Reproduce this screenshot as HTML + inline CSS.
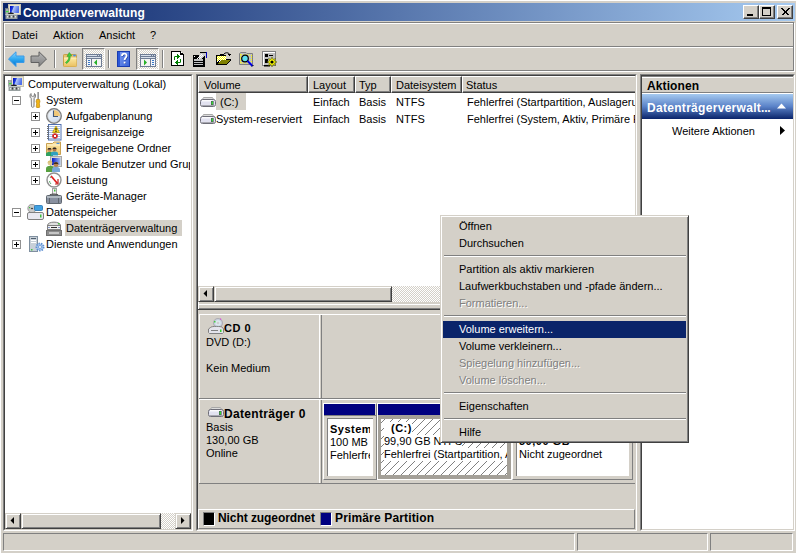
<!DOCTYPE html>
<html><head><meta charset="utf-8">
<style>
*{box-sizing:border-box;margin:0;padding:0}
html,body{width:796px;height:553px;overflow:hidden;background:#D4D0C8;font:11px "Liberation Sans",sans-serif;color:#000}
.a{position:absolute}
.t{position:absolute;white-space:nowrap;line-height:13px;font-size:11px}
.b{font-weight:bold;letter-spacing:0.5px}
.sunk{position:absolute;border:1px solid;border-color:#808080 #fff #fff #808080}
.sunk>.in{position:absolute;left:0;top:0;right:0;bottom:0;border:1px solid;border-color:#404040 #D4D0C8 #D4D0C8 #404040}
.btn{position:absolute;border:1px solid;border-color:#fff #404040 #404040 #fff;box-shadow:inset -1px -1px #808080;background:#D4D0C8}
.hdr{position:absolute;top:0;height:16px;border:1px solid;border-color:#fff #404040 #404040 #fff;box-shadow:inset -1px -1px #808080;background:#D4D0C8;border-left-width:1px}
.dither{background-color:#fff;background-image:linear-gradient(45deg,#D4D0C8 25%,transparent 25%,transparent 75%,#D4D0C8 75%),linear-gradient(45deg,#D4D0C8 25%,transparent 25%,transparent 75%,#D4D0C8 75%);background-size:2px 2px;background-position:0 0,1px 1px}
.sb{position:absolute;height:16px;border:1px solid;border-color:#D4D0C8 #404040 #404040 #D4D0C8;box-shadow:inset 1px 1px #fff,inset -1px -1px #808080;background:#D4D0C8}
.hl{position:absolute;height:1px}
.vl{position:absolute;width:1px}
.hatch{background-color:#fff;background-image:repeating-linear-gradient(-45deg,transparent 0,transparent 4.5px,#A0A0A0 4.5px,#A0A0A0 5.5px)}
.dis{color:#808080;text-shadow:1px 1px 0 #fff}
</style></head><body>
<!-- window frame -->
<div class="hl" style="left:0;top:0;width:796px;background:#fff"></div>
<div class="vl" style="left:0;top:0;height:553px;background:#fff"></div>

<!-- title bar -->
<div class="a" style="left:3px;top:3px;width:792px;height:18px;background:linear-gradient(to right,#0A246A,#A6CAF0)"></div>
<svg class="a" style="left:4px;top:3px" width="17" height="17" viewBox="0 0 17 17">
<rect x="4.5" y="1.5" width="12" height="10" fill="#E8E4D0" stroke="#C8C4B0"/>
<defs><linearGradient id="scr2" x1="0" y1="0" x2="1" y2="0.3"><stop offset="0" stop-color="#0008B8"/><stop offset="0.35" stop-color="#2040E0"/><stop offset="0.45" stop-color="#B0C4F4"/><stop offset="1" stop-color="#5070E8"/></linearGradient></defs>
<rect x="6" y="3" width="9" height="7" fill="url(#scr2)"/>
<rect x="1.5" y="5.5" width="3" height="6" fill="#A8B0B0" stroke="#808888" stroke-width="0.6"/>
<rect x="2" y="8" width="2.5" height="1.2" fill="#40E040"/>
<path d="M4 11C4.5 9 9.5 9 10 11Z" fill="#202020"/>
<rect x="1.5" y="11" width="12" height="5" fill="#98A0A0"/>
<rect x="1.5" y="11" width="12" height="1" fill="#C0C8C8"/>
<rect x="3" y="13" width="1" height="1.5" fill="#E8E8E8"/><rect x="5" y="12.5" width="1" height="2" fill="#404040"/><rect x="7" y="13" width="1" height="1.5" fill="#E8E8E8"/><rect x="9" y="12.5" width="1" height="2" fill="#404040"/><rect x="11" y="13" width="1" height="1.5" fill="#E8E8E8"/>
</svg>
<div class="t b" style="left:23px;top:7px;color:#fff;font-size:12px;letter-spacing:0.1px">Computerverwaltung</div>
<div class="btn" style="left:743px;top:5px;width:16px;height:14px"><div class="a" style="left:3px;top:8px;width:6px;height:2px;background:#000"></div></div>
<div class="btn" style="left:759px;top:5px;width:16px;height:14px"><div class="a" style="left:2px;top:1px;width:9px;height:9px;border:1px solid #000;border-top-width:2px"></div></div>
<div class="btn" style="left:777px;top:5px;width:16px;height:14px">
<svg class="a" style="left:3px;top:2px" width="9" height="8" viewBox="0 0 9 8"><path d="M0.5 0.5L7.5 7.5M1.5 0.5L8.5 7.5M7.5 0.5L0.5 7.5M8.5 0.5L1.5 7.5" stroke="#000" stroke-width="1" fill="none" shape-rendering="crispEdges"/></svg>
</div>

<!-- rebar etched border -->
<div class="a" style="left:4px;top:23px;width:791px;height:49px;border:1px solid #fff"></div>
<div class="a" style="left:3px;top:22px;width:791px;height:49px;border:1px solid #808080"></div>
<div class="hl" style="left:5px;top:46px;width:788px;background:#808080"></div>
<div class="hl" style="left:5px;top:47px;width:788px;background:#fff"></div>

<!-- menu -->
<div class="t" style="left:12px;top:29px">Datei</div>
<div class="t" style="left:53px;top:29px">Aktion</div>
<div class="t" style="left:99px;top:29px">Ansicht</div>
<div class="t" style="left:150px;top:29px">?</div>

<!-- toolbar -->
<svg class="a" style="left:8px;top:51px" width="17" height="16" viewBox="0 0 17 16">
<defs><linearGradient id="gb" x1="0" y1="0" x2="0" y2="1"><stop offset="0" stop-color="#8FD8FF"/><stop offset="0.5" stop-color="#2FA8F0"/><stop offset="1" stop-color="#0070D0"/></linearGradient></defs>
<path d="M0.5 8L8 0.8V5H16V11.5H8V15.5Z" fill="url(#gb)" stroke="#3A9AE8" stroke-width="1"/>
</svg>
<svg class="a" style="left:30px;top:51px" width="17" height="16" viewBox="0 0 17 16">
<defs><linearGradient id="gg" x1="0" y1="0" x2="0" y2="1"><stop offset="0" stop-color="#B8B8B8"/><stop offset="1" stop-color="#808080"/></linearGradient></defs>
<path d="M16.5 8L9 0.8V5H1V11.5H9V15.5Z" fill="url(#gg)" stroke="#606060" stroke-width="1"/>
</svg>
<div class="vl" style="left:54px;top:50px;height:18px;background:#808080"></div>
<div class="vl" style="left:55px;top:50px;height:18px;background:#fff"></div>
<svg class="a" style="left:63px;top:51px" width="16" height="17" viewBox="0 0 16 17">
<defs><linearGradient id="uf" x1="0" y1="0" x2="0" y2="1"><stop offset="0" stop-color="#FCE8A0"/><stop offset="1" stop-color="#EAC060"/></linearGradient></defs>
<rect x="0.5" y="3.5" width="13" height="12" rx="0.8" fill="#E8C070" stroke="#C8A048" stroke-width="1"/>
<rect x="1" y="7" width="12.5" height="8.5" fill="url(#uf)"/>
<path d="M1 7H13.5" stroke="#FFF0B8" stroke-width="1"/>
<ellipse cx="11.5" cy="4.5" rx="1.5" ry="0.9" fill="#4890E8"/>
<path d="M2.5 11.5C4.5 10 6 8.5 5.8 5L4 5.5L6.3 1.5L8.8 4.8L7.2 4.8C7.5 8.5 6 11 3.5 12.5Z" fill="#40D040" stroke="#28A028" stroke-width="0.6"/>
</svg>
<div class="a dither" style="left:82px;top:48px;width:23px;height:22px;border:1px solid;border-color:#808080 #fff #fff #808080;box-shadow:inset 1px 1px #D4D0C8"></div>
<svg class="a" style="left:86px;top:54px" width="16" height="13" viewBox="0 0 16 13" shape-rendering="crispEdges">
<rect x="0" y="0" width="16" height="13" fill="#6E7C94"/>
<rect x="1" y="1" width="10" height="1" fill="#D8E0EC"/><rect x="12" y="1" width="1" height="1" fill="#D8E0EC"/><rect x="14" y="1" width="1" height="1" fill="#D8E0EC"/>
<rect x="1" y="3" width="14" height="1" fill="#D8E0EC"/>
<rect x="1" y="5" width="4" height="7" fill="#F4F6FA"/>
<rect x="6" y="5" width="9" height="7" fill="#F4F4F4"/>
<rect x="2" y="6" width="2" height="1" fill="#3878C8"/><rect x="2" y="8" width="2" height="1" fill="#3878C8"/><rect x="2" y="10" width="2" height="1" fill="#3878C8"/>
<path d="M8 8.5L11 5.5V11.5Z" fill="#28B028" shape-rendering="auto"/>
</svg>
<div class="vl" style="left:108px;top:50px;height:18px;background:#808080"></div>
<div class="vl" style="left:109px;top:50px;height:18px;background:#fff"></div>
<svg class="a" style="left:117px;top:51px" width="13" height="16" viewBox="0 0 13 16">
<defs><linearGradient id="hb" x1="0" y1="0" x2="1" y2="1"><stop offset="0" stop-color="#7898F0"/><stop offset="1" stop-color="#3A64D8"/></linearGradient></defs>
<rect x="0" y="0" width="13" height="16" fill="#1A3CB0"/>
<rect x="1" y="1" width="2.5" height="14" fill="#2C58D8"/>
<rect x="3" y="1" width="9" height="14" fill="url(#hb)"/>
<path d="M5 5C5 3.3 6 2.6 7.3 2.6C8.8 2.6 9.6 3.5 9.6 4.8C9.6 6.5 7.6 6.8 7.6 9" fill="none" stroke="#2040A0" stroke-width="1.8" transform="translate(0.6 0.6)"/>
<path d="M5 5C5 3.3 6 2.6 7.3 2.6C8.8 2.6 9.6 3.5 9.6 4.8C9.6 6.5 7.6 6.8 7.6 9" fill="none" stroke="#fff" stroke-width="1.8"/>
<rect x="7.4" y="11.4" width="1.6" height="1.6" fill="#2040A0"/>
<rect x="6.7" y="10.7" width="1.8" height="1.8" fill="#fff"/>
</svg>
<div class="a dither" style="left:136px;top:48px;width:23px;height:22px;border:1px solid;border-color:#808080 #fff #fff #808080;box-shadow:inset 1px 1px #D4D0C8"></div>
<svg class="a" style="left:140px;top:54px" width="16" height="13" viewBox="0 0 16 13" shape-rendering="crispEdges">
<rect x="0" y="0" width="16" height="13" fill="#6E7C94"/>
<rect x="1" y="1" width="10" height="1" fill="#D8E0EC"/><rect x="12" y="1" width="1" height="1" fill="#D8E0EC"/><rect x="14" y="1" width="1" height="1" fill="#D8E0EC"/>
<rect x="1" y="3" width="14" height="1" fill="#D8E0EC"/>
<rect x="1" y="5" width="9" height="7" fill="#F4F4F4"/>
<rect x="11" y="5" width="4" height="7" fill="#F4F6FA"/>
<rect x="12" y="6" width="2" height="1" fill="#3878C8"/><rect x="12" y="8" width="2" height="1" fill="#3878C8"/><rect x="12" y="10" width="2" height="1" fill="#3878C8"/>
<path d="M4 5.5L7 8.5L4 11.5Z" fill="#28B028" shape-rendering="auto"/>
</svg>
<div class="vl" style="left:162px;top:50px;height:18px;background:#808080"></div>
<div class="vl" style="left:163px;top:50px;height:18px;background:#fff"></div>
<svg class="a" style="left:171px;top:51px" width="14" height="16" viewBox="0 0 14 16" shape-rendering="crispEdges">
<path d="M0 0H9L13 4V15H0Z" fill="#000"/>
<path d="M1 1H9V4H12V14H1Z" fill="#fff"/>
<rect x="10" y="1" width="1" height="1" fill="#fff"/><rect x="10" y="2" width="2" height="1" fill="#000"/>
<g fill="#008000">
<rect x="6" y="3" width="1" height="5"/><rect x="7" y="4" width="1" height="3"/><rect x="8" y="5" width="1" height="1"/>
<rect x="4" y="5" width="2" height="1"/><rect x="3" y="5" width="1" height="1" opacity="0.6"/><rect x="3" y="6" width="1" height="3"/>
<rect x="6" y="9" width="1" height="5"/><rect x="5" y="10" width="1" height="3"/><rect x="4" y="11" width="1" height="1"/>
<rect x="7" y="11" width="2" height="1"/><rect x="9" y="11" width="1" height="1" opacity="0.6"/><rect x="9" y="8" width="1" height="3"/>
</g>
</svg>
<svg class="a" style="left:193px;top:51px" width="16" height="16" viewBox="0 0 16 16" shape-rendering="crispEdges">
<rect x="0" y="4" width="12" height="12" fill="#000"/>
<rect x="1" y="5" width="1" height="1" fill="#fff"/>
<rect x="1" y="8" width="9" height="2" fill="#C0C0C0"/>
<rect x="1" y="11" width="9" height="1" fill="#C0C0C0"/>
<rect x="1" y="13" width="9" height="1" fill="#C0C0C0"/>
<path d="M7 1H13V5H11L8 8H6Z" fill="#C8C8C8"/>
<rect x="7" y="1" width="6" height="1" fill="#000"/>
<rect x="4" y="7" width="1" height="1" fill="#fff"/><rect x="5" y="6" width="1" height="1" fill="#fff"/><rect x="6" y="5" width="1" height="1" fill="#fff"/><rect x="7" y="4" width="1" height="1" fill="#fff"/><rect x="8" y="3" width="1" height="1" fill="#fff"/>
<rect x="6" y="7" width="1" height="1" fill="#fff"/><rect x="7" y="6" width="1" height="1" fill="#fff"/><rect x="8" y="5" width="1" height="1" fill="#fff"/><rect x="9" y="4" width="1" height="1" fill="#fff"/>
<rect x="13" y="1" width="1" height="6" fill="#0000C0"/>
</svg>
<svg class="a" style="left:216px;top:51px" width="16" height="16" viewBox="0 0 16 16" shape-rendering="crispEdges">
<defs><pattern id="yd" width="2" height="2" patternUnits="userSpaceOnUse"><rect width="2" height="2" fill="#FFFF00"/><rect x="1" y="0" width="1" height="1" fill="#fff"/><rect x="0" y="1" width="1" height="1" fill="#fff"/></pattern></defs>
<path d="M0 4H3L4 3H7L8 4H10V8H15V9L11 14H0Z" fill="#000"/>
<rect x="1" y="5" width="9" height="8" fill="url(#yd)"/>
<path d="M2 13L5 9H14L11 13Z" fill="#808000"/>
<path d="M1 13L4 9" stroke="#000" stroke-width="1"/>
<path d="M8 3C9 1.5 12 1.2 13.5 3" fill="none" stroke="#000" stroke-width="1" shape-rendering="auto"/>
<path d="M12 3H15L13.5 5Z" fill="#000"/>
</svg>
<svg class="a" style="left:239px;top:52px" width="16" height="16" viewBox="0 0 16 16">
<path d="M0.5 1.5L2 0.5H7L8 1.5H13.5V12.5H0.5Z" fill="#C0C0C0" stroke="#808080"/>
<path d="M2 3H12M2 11H12" stroke="#FFFF00" stroke-dasharray="1 1"/>
<path d="M1.5 2V11M12.5 3V11" stroke="#FFFF00" stroke-dasharray="1 1"/>
<circle cx="6" cy="6.5" r="3.3" fill="#60E0F0" stroke="#000" stroke-width="1.2"/>
<path d="M8.5 9L13.5 14" stroke="#0000E0" stroke-width="2"/>
<path d="M13 14.5L14.5 13" stroke="#000" stroke-width="1"/>
</svg>
<svg class="a" style="left:262px;top:51px" width="16" height="16" viewBox="0 0 16 16">
<rect x="0.5" y="0.5" width="13" height="14" fill="#C0C0C0" stroke="#808080"/>
<rect x="1" y="1" width="12" height="1" fill="#fff"/><rect x="1" y="1" width="1" height="13" fill="#fff"/>
<rect x="3" y="3" width="3" height="3" fill="#000"/><rect x="7" y="4" width="4" height="1" fill="#000"/>
<rect x="3" y="8" width="3" height="4" fill="#000"/>
<rect x="2" y="14" width="6" height="1.5" fill="#000"/>
<path d="M10 6L11 8.5L13.5 7.5L12.5 10L15 11L12.5 12L13.5 14.5L11 13.5L10 16L9 13.5L6.5 14.5L7.5 12L5 11L7.5 10L6.5 7.5L9 8.5Z" fill="#FFFF00" stroke="#404000" stroke-width="0.5"/>
<circle cx="10" cy="11" r="1.6" fill="#000"/>
</svg>

<!-- left panel -->
<div class="sunk" style="left:3px;top:74px;width:190px;height:457px"><div class="in" style="background:#fff"></div></div>
<!-- tree -->
<svg class="a" style="left:7px;top:75px" width="17" height="17" viewBox="0 0 17 17">
<rect x="4.5" y="1.5" width="12" height="10" fill="#E8E4D0" stroke="#C8C4B0"/>
<defs><linearGradient id="scr3" x1="0" y1="0" x2="1" y2="0.3"><stop offset="0" stop-color="#0008B8"/><stop offset="0.35" stop-color="#2040E0"/><stop offset="0.45" stop-color="#B0C4F4"/><stop offset="1" stop-color="#5070E8"/></linearGradient></defs>
<rect x="6" y="3" width="9" height="7" fill="url(#scr3)"/>
<rect x="1.5" y="5.5" width="3" height="6" fill="#A8B0B0" stroke="#808888" stroke-width="0.6"/>
<rect x="2" y="8" width="2.5" height="1.2" fill="#40E040"/>
<path d="M4 11C4.5 9 9.5 9 10 11Z" fill="#202020"/>
<rect x="1.5" y="11" width="12" height="5" fill="#98A0A0"/>
<rect x="1.5" y="11" width="12" height="1" fill="#C0C8C8"/>
<rect x="3" y="13" width="1" height="1.5" fill="#E8E8E8"/><rect x="5" y="12.5" width="1" height="2" fill="#404040"/><rect x="7" y="13" width="1" height="1.5" fill="#E8E8E8"/><rect x="9" y="12.5" width="1" height="2" fill="#404040"/><rect x="11" y="13" width="1" height="1.5" fill="#E8E8E8"/>
</svg>
<div class="t" style="left:28px;top:78px">Computerverwaltung (Lokal)</div>

<div class="a" style="left:12px;top:96px;width:9px;height:9px;border:1px solid #919191;background:#fff"><div class="a" style="left:1px;top:3px;width:5px;height:1px;background:#000"></div></div>
<svg class="a" style="left:29px;top:92px" width="16" height="16" viewBox="0 0 16 16">
<defs><linearGradient id="wr" x1="0" y1="0" x2="1" y2="0"><stop offset="0" stop-color="#C0C0C0"/><stop offset="0.5" stop-color="#F8F8F8"/><stop offset="1" stop-color="#A0A0A0"/></linearGradient></defs>
<path d="M2 1.5C0.5 2.5 0.5 5.5 2.2 6.5L2.5 14.5C2.5 15.5 5 15.5 5 14.5L5.2 6.5C6.8 5.5 7 2.5 5.5 1.5L5.2 3.8L3.8 4.5L2.3 3.8Z" fill="url(#wr)" stroke="#6A6A6A" stroke-width="0.8"/>
<rect x="8.6" y="0" width="1" height="7.5" fill="#505050"/>
<path d="M7.5 7.5H10.5L11 10L10.3 11L10.8 15C10.8 16 7.2 16 7.2 15L7.7 11L7 10Z" fill="#F0B418" stroke="#B07800" stroke-width="0.6"/>
</svg>
<div class="t" style="left:46px;top:94px">System</div>

<div class="a" style="left:31px;top:112px;width:9px;height:9px;border:1px solid #919191;background:#fff"><div class="a" style="left:1px;top:3px;width:5px;height:1px;background:#000"></div><div class="a" style="left:3px;top:1px;width:1px;height:5px;background:#000"></div></div>
<svg class="a" style="left:46px;top:108px" width="16" height="16" viewBox="0 0 16 16">
<defs><linearGradient id="cf" x1="0" y1="0" x2="1" y2="1"><stop offset="0" stop-color="#F4F8FC"/><stop offset="1" stop-color="#C8D8EC"/></linearGradient></defs>
<circle cx="8" cy="8" r="7.2" fill="url(#cf)" stroke="#7C7C7C" stroke-width="1.5"/>
<circle cx="8" cy="8" r="6.2" fill="none" stroke="#D0D0D0" stroke-width="0.6"/>
<path d="M8 2A6 6 0 0 1 14 8H8Z" fill="#F0C878"/>
<path d="M7.5 2.5V8.5H12" fill="none" stroke="#405878" stroke-width="1.1"/>
</svg>
<div class="t" style="left:66px;top:110px">Aufgabenplanung</div>

<div class="a" style="left:31px;top:128px;width:9px;height:9px;border:1px solid #919191;background:#fff"><div class="a" style="left:1px;top:3px;width:5px;height:1px;background:#000"></div><div class="a" style="left:3px;top:1px;width:1px;height:5px;background:#000"></div></div>
<svg class="a" style="left:46px;top:124px" width="16" height="17" viewBox="0 0 16 17">
<rect x="2.5" y="0.5" width="12.5" height="15.5" fill="#fff" stroke="#5070B0"/>
<path d="M3 2.5H14.5M3 4.5H14.5M3 6.5H14.5M3 8.5H14.5M3 10.5H14.5M3 12.5H14.5M3 14.5H14.5" stroke="#A8C0E8" stroke-width="1"/>
<path d="M1 2.5H3M1 4.5H3M1 6.5H3M1 8.5H3M1 10.5H3M1 12.5H3M1 14.5H3" stroke="#707070" stroke-width="1"/>
<path d="M10 2L13.5 8.5H6.5Z" fill="#F8D820" stroke="#B09000" stroke-width="0.7"/>
<rect x="9.5" y="4" width="1" height="2.5" fill="#000"/><rect x="9.5" y="7" width="1" height="1" fill="#000"/>
<circle cx="9" cy="12" r="2.8" fill="#D02020"/>
<path d="M7.8 10.8L10.2 13.2M10.2 10.8L7.8 13.2" stroke="#fff" stroke-width="1"/>
</svg>
<div class="t" style="left:66px;top:126px">Ereignisanzeige</div>

<div class="a" style="left:31px;top:144px;width:9px;height:9px;border:1px solid #919191;background:#fff"><div class="a" style="left:1px;top:3px;width:5px;height:1px;background:#000"></div><div class="a" style="left:3px;top:1px;width:1px;height:5px;background:#000"></div></div>
<svg class="a" style="left:46px;top:140px" width="16" height="17" viewBox="0 0 16 17">
<defs><linearGradient id="fo" x1="0" y1="0" x2="0" y2="1"><stop offset="0" stop-color="#FBE6A8"/><stop offset="1" stop-color="#EEC870"/></linearGradient></defs>
<path d="M0.5 3.5H6.5L8 2H14.5V14.5H0.5Z" fill="url(#fo)" stroke="#C8A050"/>
<path d="M1 5H14" stroke="#FFF4D0" stroke-width="1"/>
<rect x="10.5" y="2.8" width="3" height="1.2" fill="#4A90E0"/>
<path d="M0 16V14C0 12.5 1.5 12 3.5 12C5.5 12 7 12.5 7 14V16Z" fill="#30A060"/>
<circle cx="3.5" cy="10" r="2" fill="#C89060"/><path d="M1.5 9.5C1.7 7.6 5.3 7.6 5.5 9.5Z" fill="#302820"/>
<path d="M5 15.5V13.5C5 12 6.5 11.5 8.5 11.5C10.5 11.5 12 12 12 13.5V15.5Z" fill="#30A0C0"/>
<circle cx="8.5" cy="9.5" r="2" fill="#B07848"/><path d="M6.5 9C6.7 7.1 10.3 7.1 10.5 9Z" fill="#302820"/>
</svg>
<div class="t" style="left:66px;top:142px">Freigegebene Ordner</div>

<div class="a" style="left:31px;top:160px;width:9px;height:9px;border:1px solid #919191;background:#fff"><div class="a" style="left:1px;top:3px;width:5px;height:1px;background:#000"></div><div class="a" style="left:3px;top:1px;width:1px;height:5px;background:#000"></div></div>
<svg class="a" style="left:46px;top:156px" width="16" height="17" viewBox="0 0 16 17">
<defs><linearGradient id="lu" x1="0" y1="0" x2="1" y2="0"><stop offset="0" stop-color="#0018C8"/><stop offset="1" stop-color="#A8C0F0"/></linearGradient></defs>
<rect x="4.5" y="0.5" width="11" height="10" fill="#D8D8D0" stroke="#A8A8A8"/>
<rect x="6" y="2" width="8.5" height="7" fill="url(#lu)"/>
<path d="M0 16V12.5C0 10.5 2 10 4 10C6 10 8 10.5 8 12.5V16Z" fill="#58A040"/>
<circle cx="4" cy="7" r="2.4" fill="#E0C890"/><path d="M1.6 6.5C1.8 4.2 6.2 4.2 6.4 6.5Z" fill="#D8C070"/>
<path d="M6 16V13.5C6 11.5 8 11 10 11C12 11 14 11.5 14 13.5V16Z" fill="#78A8D8"/>
<circle cx="10" cy="8.5" r="2.4" fill="#B88050"/><path d="M7.6 8C7.8 5.7 12.2 5.7 12.4 8Z" fill="#403020"/>
</svg>
<div class="a" style="left:66px;top:156px;width:124px;height:16px;overflow:hidden"><div class="t" style="left:0;top:2px">Lokale Benutzer und Gruppen</div></div>

<div class="a" style="left:31px;top:176px;width:9px;height:9px;border:1px solid #919191;background:#fff"><div class="a" style="left:1px;top:3px;width:5px;height:1px;background:#000"></div><div class="a" style="left:3px;top:1px;width:1px;height:5px;background:#000"></div></div>
<svg class="a" style="left:46px;top:172px" width="16" height="16" viewBox="0 0 16 16">
<circle cx="8" cy="8" r="7" fill="#fff" stroke="#909090" stroke-width="1.4"/>
<path d="M4 6A5 5 0 0 1 6 4M3.5 9A5 5 0 0 0 5 12" stroke="#50A060" stroke-width="0.9" fill="none"/>
<path d="M5 4L11.5 11.5" stroke="#E02020" stroke-width="1.8"/>
<path d="M12 7L12 12L9 12" stroke="#C02020" stroke-width="1.2" fill="none"/>
</svg>
<div class="t" style="left:66px;top:174px">Leistung</div>

<svg class="a" style="left:46px;top:188px" width="16" height="16" viewBox="0 0 16 16">
<rect x="6.5" y="0.5" width="4" height="6" fill="#F0F0F0" stroke="#A0A0A0"/>
<rect x="8" y="1.5" width="1.5" height="2" fill="#40C040"/>
<path d="M4 7.5C4 5.5 12 5.5 12 7.5" fill="none" stroke="#404040" stroke-width="1.2"/>
<rect x="0.5" y="7.5" width="15" height="8" rx="1" fill="#8890A0" stroke="#606870"/>
<rect x="1" y="8" width="14" height="2" fill="#B0B8C0"/>
<rect x="3" y="10" width="1" height="5" fill="#606870"/><rect x="12" y="10" width="1" height="5" fill="#606870"/>
</svg>
<div class="t" style="left:66px;top:190px">Geräte-Manager</div>

<div class="a" style="left:12px;top:208px;width:9px;height:9px;border:1px solid #919191;background:#fff"><div class="a" style="left:1px;top:3px;width:5px;height:1px;background:#000"></div></div>
<svg class="a" style="left:27px;top:204px" width="17" height="16" viewBox="0 0 17 16">
<circle cx="5" cy="4.5" r="4.2" fill="#C8C8C8" stroke="#909090" stroke-width="0.8"/>
<circle cx="5" cy="4.5" r="1.3" fill="#303030" stroke="#F0F0F0" stroke-width="0.6"/>
<rect x="2" y="3" width="1.2" height="1.2" fill="#40C040"/>
<rect x="7.5" y="1.5" width="8" height="5" rx="1" fill="#40A0E0" stroke="#2070B0" stroke-width="0.8"/>
<rect x="0.5" y="8.5" width="16" height="7" rx="1.5" fill="#E8E8F0" stroke="#808080"/>
<rect x="13" y="10.5" width="1.5" height="3" fill="#40C040"/>
</svg>
<div class="t" style="left:46px;top:206px">Datenspeicher</div>

<div class="a" style="left:65px;top:220px;width:117px;height:16px;background:#D4D0C8"></div>
<svg class="a" style="left:46px;top:220px" width="16" height="16" viewBox="0 0 16 16">
<path d="M1.5 5.5C1.5 1 14.5 1 14.5 5.5V9.5H1.5Z" fill="#E0E0E0" stroke="#808080"/>
<rect x="1.5" y="5.5" width="13" height="4" fill="#F0F0F0" stroke="#808080"/>
<rect x="5" y="7" width="6" height="1" fill="#303030"/>
<rect x="12" y="3" width="1.5" height="1.5" fill="#40C040"/>
<rect x="2.5" y="7" width="1" height="1" fill="#2040A0"/><rect x="12.5" y="7" width="1" height="1" fill="#2040A0"/>
<rect x="0.5" y="10.5" width="15" height="5" fill="#8C8C8C" stroke="#707070"/>
<rect x="3" y="12.5" width="10" height="1" fill="#fff"/>
</svg>
<div class="t" style="left:66px;top:222px">Datenträgerverwaltung</div>

<div class="a" style="left:12px;top:240px;width:9px;height:9px;border:1px solid #919191;background:#fff"><div class="a" style="left:1px;top:3px;width:5px;height:1px;background:#000"></div><div class="a" style="left:3px;top:1px;width:1px;height:5px;background:#000"></div></div>
<svg class="a" style="left:29px;top:236px" width="16" height="16" viewBox="0 0 16 16">
<rect x="0.5" y="0.5" width="8" height="15" fill="#C8D0D8" stroke="#8090A0"/>
<rect x="2" y="2" width="5" height="1" fill="#506070"/><rect x="2" y="4" width="5" height="1" fill="#fff"/><rect x="2" y="6" width="5" height="1" fill="#fff"/>
<rect x="2" y="13" width="1.5" height="1.5" fill="#40C040"/>
<circle cx="11" cy="11" r="3.6" fill="#A8C8F0" stroke="#6090D0" stroke-width="1.8" stroke-dasharray="1.4 1.1"/>
<circle cx="11" cy="11" r="1.5" fill="#fff" stroke="#5080C0" stroke-width="0.6"/>
</svg>
<div class="t" style="left:46px;top:238px">Dienste und Anwendungen</div>

<!-- left h-scrollbar -->
<div class="sb" style="left:5px;top:513px;width:16px"><svg class="a" style="left:4px;top:3px" width="4" height="7"><path d="M4 0V7L0.5 3.5Z" fill="#000"/></svg></div>
<div class="sb" style="left:21px;top:513px;width:140px"></div>
<div class="a dither" style="left:161px;top:513px;width:14px;height:16px"></div>
<div class="sb" style="left:175px;top:513px;width:16px"><svg class="a" style="left:5px;top:3px" width="4" height="7"><path d="M0 0V7L3.5 3.5Z" fill="#000"/></svg></div>

<!-- center panel -->
<div class="sunk" style="left:196px;top:74px;width:441px;height:457px"><div class="in" style="background:#D4D0C8"></div></div>
<!-- list view -->
<div class="a" style="left:198px;top:76px;width:437px;height:226px;background:#fff;overflow:hidden">
 <div class="hdr" style="left:0;width:110px;height:17px"></div><div class="t" style="left:6px;top:3px">Volume</div>
 <div class="hdr" style="left:110px;width:47px;height:17px"></div><div class="t" style="left:115px;top:3px">Layout</div>
 <div class="hdr" style="left:157px;width:36px;height:17px"></div><div class="t" style="left:161px;top:3px">Typ</div>
 <div class="hdr" style="left:193px;width:71px;height:17px"></div><div class="t" style="left:198px;top:3px">Dateisystem</div>
 <div class="hdr" style="left:264px;width:200px;height:17px"></div><div class="t" style="left:268px;top:3px">Status</div>
 <div class="a" style="left:18px;top:17px;width:30px;height:17px;background:#D4D0C8"></div>
 <svg class="a" style="left:2px;top:21px" width="16" height="10" viewBox="0 0 16 10"><path d="M3.5 0.5H12.5L14 3H2Z" fill="#DCDCDC" stroke="#A8A8A8" stroke-width="1"/><rect x="0.5" y="2.5" width="15" height="7" rx="2" fill="#E2E2F0" stroke="#6E6E78"/><rect x="2" y="3.2" width="10" height="1.2" fill="#fff"/><rect x="1.5" y="8" width="13" height="1" fill="#A8A8B0"/><rect x="11" y="4" width="2.6" height="4" fill="#505058"/><rect x="11.6" y="4.5" width="1.4" height="3" fill="#30E030"/></svg>
 <div class="t" style="left:22px;top:20px">(C:)</div>
 <svg class="a" style="left:2px;top:38px" width="16" height="10" viewBox="0 0 16 10"><path d="M3.5 0.5H12.5L14 3H2Z" fill="#DCDCDC" stroke="#A8A8A8" stroke-width="1"/><rect x="0.5" y="2.5" width="15" height="7" rx="2" fill="#E2E2F0" stroke="#6E6E78"/><rect x="2" y="3.2" width="10" height="1.2" fill="#fff"/><rect x="1.5" y="8" width="13" height="1" fill="#A8A8B0"/><rect x="11" y="4" width="2.6" height="4" fill="#505058"/><rect x="11.6" y="4.5" width="1.4" height="3" fill="#30E030"/></svg>
 <div class="t" style="left:18px;top:37px">System-reserviert</div>
 <div class="t" style="left:115px;top:20px">Einfach</div><div class="t" style="left:161px;top:20px">Basis</div><div class="t" style="left:198px;top:20px">NTFS</div><div class="t" style="left:269px;top:20px">Fehlerfrei (Startpartition, Auslagerungsdatei, Absturzabbild, Primäre Partition)</div>
 <div class="t" style="left:115px;top:37px">Einfach</div><div class="t" style="left:161px;top:37px">Basis</div><div class="t" style="left:198px;top:37px">NTFS</div><div class="t" style="left:269px;top:37px">Fehlerfrei (System, Aktiv, Primäre Partition)</div>
 <!-- h scrollbar -->
 <div class="sb" style="left:0;top:210px;width:16px"><svg class="a" style="left:4px;top:3px" width="4" height="7"><path d="M4 0V7L0.5 3.5Z" fill="#000"/></svg></div>
 <div class="sb" style="left:16px;top:210px;width:178px"></div>
 <div class="a dither" style="left:194px;top:210px;width:243px;height:16px"></div>
</div>
<!-- splitter -->
<div class="hl" style="left:198px;top:304px;width:437px;background:#fff"></div>
<div class="hl" style="left:198px;top:308px;width:437px;background:#404040"></div>
<!-- disk view -->
<div class="hl" style="left:198px;top:308px;width:437px;background:#808080"></div>
<div class="hl" style="left:198px;top:309px;width:437px;background:#404040"></div>
<div class="vl" style="left:198px;top:302px;height:7px;background:#fff"></div>
<!-- CD row -->
<div class="hl" style="left:199px;top:314px;width:436px;background:#fff"></div>
<div class="vl" style="left:199px;top:314px;height:84px;background:#fff"></div>
<div class="vl" style="left:319px;top:314px;height:84px;background:#fff"></div>
<div class="vl" style="left:321px;top:315px;height:83px;background:#808080"></div>
<div class="hl" style="left:199px;top:398px;width:436px;background:#808080"></div>
<svg class="a" style="left:208px;top:318px" width="17" height="16" viewBox="0 0 17 16">
<defs><radialGradient id="cdg"><stop offset="0" stop-color="#fff"/><stop offset="0.5" stop-color="#D8E8F0"/><stop offset="1" stop-color="#B8B8C8"/></radialGradient></defs>
<circle cx="10" cy="5" r="4.6" fill="url(#cdg)" stroke="#A0A0A8" stroke-width="0.6"/>
<circle cx="10" cy="5" r="1" fill="#fff" stroke="#909090" stroke-width="0.5"/>
<rect x="6" y="3" width="1.5" height="1.5" fill="#40D040"/><rect x="12" y="0.5" width="1.2" height="1.2" fill="#E040E0"/>
<path d="M2.5 9.5C3 8 14 8 14.5 9.5L15.5 11V14.5L14.5 15.5H1.5L0.5 14.5V11Z" fill="#E4E4EC" stroke="#808080"/>
<rect x="3" y="12" width="7" height="1" fill="#808080"/>
<rect x="12" y="11.5" width="1.5" height="2.5" fill="#30D030"/>
</svg>
<div class="t b" style="left:224px;top:322px">CD 0</div>
<div class="t" style="left:206px;top:336px">DVD (D:)</div>
<div class="t" style="left:206px;top:362px">Kein Medium</div>
<!-- Disk 0 row -->
<div class="hl" style="left:199px;top:399px;width:436px;background:#fff"></div>
<div class="vl" style="left:199px;top:399px;height:84px;background:#fff"></div>
<div class="vl" style="left:319px;top:399px;height:84px;background:#fff"></div>
<div class="vl" style="left:321px;top:400px;height:83px;background:#808080"></div>
<div class="hl" style="left:199px;top:483px;width:436px;background:#808080"></div>
<svg class="a" style="left:208px;top:407px" width="16" height="10" viewBox="0 0 16 10"><path d="M3.5 0.5H12.5L14 3H2Z" fill="#DCDCDC" stroke="#A8A8A8" stroke-width="1"/><rect x="0.5" y="2.5" width="15" height="7" rx="2" fill="#E2E2F0" stroke="#6E6E78"/><rect x="2" y="3.2" width="10" height="1.2" fill="#fff"/><rect x="1.5" y="8" width="13" height="1" fill="#A8A8B0"/><rect x="11" y="4" width="2.6" height="4" fill="#505058"/><rect x="11.6" y="4.5" width="1.4" height="3" fill="#30E030"/></svg>
<div class="t b" style="left:224px;top:408px;font-size:12px;letter-spacing:0.33px">Datenträger 0</div>
<div class="t" style="left:206px;top:421px">Basis</div>
<div class="t" style="left:206px;top:434px">130,00 GB</div>
<div class="t" style="left:206px;top:447px">Online</div>
<!-- System partition -->
<div class="a" style="left:323px;top:403px;width:54px;height:77px;border:1px solid;border-color:#fff #808080 #808080 #fff;background:#D4D0C8"></div>
<div class="a" style="left:324px;top:404px;width:51px;height:11px;background:#000080"></div>
<div class="hl" style="left:324px;top:415px;width:52px;background:#808080"></div>
<div class="a" style="left:327px;top:418px;width:46px;height:58px;border-left:1px solid #808080;border-top:1px solid #808080;background:#fff"></div>
<div class="a" style="left:328px;top:419px;width:42px;height:56px;overflow:hidden">
 <div class="t b" style="left:2px;top:4px">System-reserviert</div>
 <div class="t" style="left:2px;top:17px">100 MB NTFS</div>
 <div class="t" style="left:2px;top:30px">Fehlerfrei (System, Aktiv, Primäre Partition)</div>
</div>
<!-- C partition -->
<div class="a" style="left:377px;top:403px;width:135px;height:77px;border:1px solid #fff;background:#A4A098"></div>
<div class="a" style="left:378px;top:404px;width:133px;height:11px;background:#000080"></div>
<div class="a" style="left:381px;top:419px;width:126px;height:56px;overflow:hidden;background:#fff">
 <svg class="a" style="left:0;top:0" width="126" height="56"><defs><pattern id="hp" width="8" height="8" patternUnits="userSpaceOnUse"><rect x="3" y="0" width="1" height="1" fill="#808080"/><rect x="2" y="1" width="1" height="1" fill="#808080"/><rect x="1" y="2" width="1" height="1" fill="#808080"/><rect x="0" y="3" width="1" height="1" fill="#808080"/><rect x="7" y="4" width="1" height="1" fill="#808080"/><rect x="6" y="5" width="1" height="1" fill="#808080"/><rect x="5" y="6" width="1" height="1" fill="#808080"/><rect x="4" y="7" width="1" height="1" fill="#808080"/></pattern></defs><rect width="126" height="56" fill="url(#hp)"/></svg>
 <div class="t b" style="left:3px;top:3px;padding-left:7px;background:#fff">(C:)</div>
 <div class="t" style="left:3px;top:16px;background:#fff">99,90 GB NTFS</div>
 <div class="t" style="left:3px;top:29px;background:#fff">Fehlerfrei (Startpartition, Auslagerungsdatei)</div>
</div>
<!-- Unallocated -->
<div class="a" style="left:512px;top:403px;width:121px;height:77px;border:1px solid;border-color:#fff #808080 #808080 #fff;background:#D4D0C8"></div>
<div class="a" style="left:513px;top:404px;width:119px;height:11px;background:#000"></div>
<div class="hl" style="left:513px;top:415px;width:119px;background:#808080"></div>
<div class="a" style="left:516px;top:418px;width:113px;height:58px;border-left:1px solid #808080;border-top:1px solid #808080;background:#fff;overflow:hidden">
 <div class="t b" style="left:2px;top:16px">30,00 GB</div>
 <div class="t" style="left:2px;top:29px">Nicht zugeordnet</div>
</div>
<!-- legend -->
<div class="a" style="left:198px;top:509px;width:437px;height:20px;border:1px solid;border-color:#fff #808080 #808080 #fff"></div>
<div class="a" style="left:203px;top:512px;width:12px;height:14px;border:1px solid;border-color:#808080 #fff #fff #808080;background:#000"></div>
<div class="t b" style="left:218px;top:512px;font-size:12px;letter-spacing:-0.07px">Nicht zugeordnet</div>
<div class="a" style="left:320px;top:512px;width:12px;height:14px;border:1px solid;border-color:#808080 #fff #fff #808080;background:#000080"></div>
<div class="t b" style="left:335px;top:512px;font-size:12px;letter-spacing:0.15px">Primäre Partition</div>

<!-- right panel -->
<div class="sunk" style="left:640px;top:74px;width:155px;height:457px"><div class="in" style="background:#fff"></div></div>

<!-- actions panel content -->
<div class="hl" style="left:642px;top:76px;width:151px;background:#808080"></div>
<div class="a" style="left:642px;top:77px;width:151px;height:16px;background:#D4D0C8;border-top:1px solid #fff;border-bottom:1px solid #808080"></div>
<div class="t b" style="left:647px;top:80px;font-size:12px;letter-spacing:0.1px">Aktionen</div>
<div class="hl" style="left:642px;top:93px;width:151px;background:#fff"></div>
<div class="a" style="left:642px;top:94px;width:151px;height:25px;background:linear-gradient(to bottom,#A6CAF0 0%,#5A82C8 50%,#0A246A 100%)"></div>
<div class="t b" style="left:647px;top:102px;color:#fff;font-size:12px;letter-spacing:0.3px">Datenträgerverwalt<span style="letter-spacing:-0.3px">...</span></div>
<svg class="a" style="left:777px;top:103px" width="9" height="6" viewBox="0 0 9 6"><path d="M0 5.5L4.5 0.5L9 5.5Z" fill="#fff"/></svg>
<div class="t" style="left:672px;top:125px">Weitere Aktionen</div>
<svg class="a" style="left:780px;top:126px" width="5" height="9" viewBox="0 0 5 9"><path d="M0 0L5 4.5L0 9Z" fill="#000"/></svg>

<!-- status bar -->
<div class="a" style="left:3px;top:533px;width:572px;height:18px;border:1px solid;border-color:#808080 #fff #fff #808080"></div>
<div class="a" style="left:577px;top:533px;width:131px;height:18px;border:1px solid;border-color:#808080 #fff #fff #808080"></div>
<div class="a" style="left:710px;top:533px;width:83px;height:18px;border:1px solid;border-color:#808080 #fff #fff #808080"></div>

<!-- context menu -->
<div class="a" style="left:440px;top:215px;width:249px;height:228px;border:1px solid;border-color:#D4D0C8 #404040 #404040 #D4D0C8;box-shadow:inset 1px 1px #fff,inset -1px -1px #808080;background:#D4D0C8"></div>
<div class="t" style="left:459px;top:220px">Öffnen</div>
<div class="t" style="left:459px;top:237px">Durchsuchen</div>
<div class="hl" style="left:444px;top:255px;width:242px;background:#808080"></div>
<div class="hl" style="left:444px;top:256px;width:242px;background:#fff"></div>
<div class="t" style="left:459px;top:263px">Partition als aktiv markieren</div>
<div class="t" style="left:459px;top:280px">Laufwerkbuchstaben und -pfade ändern...</div>
<div class="t dis" style="left:459px;top:297px">Formatieren...</div>
<div class="hl" style="left:444px;top:315px;width:242px;background:#808080"></div>
<div class="hl" style="left:444px;top:316px;width:242px;background:#fff"></div>
<div class="a" style="left:443px;top:321px;width:243px;height:17px;background:#0A246A"></div>
<div class="t" style="left:459px;top:323px;color:#fff">Volume erweitern...</div>
<div class="t" style="left:459px;top:340px">Volume verkleinern...</div>
<div class="t dis" style="left:459px;top:357px">Spiegelung hinzufügen...</div>
<div class="t dis" style="left:459px;top:374px">Volume löschen...</div>
<div class="hl" style="left:444px;top:392px;width:242px;background:#808080"></div>
<div class="hl" style="left:444px;top:393px;width:242px;background:#fff"></div>
<div class="t" style="left:459px;top:400px">Eigenschaften</div>
<div class="hl" style="left:444px;top:418px;width:242px;background:#808080"></div>
<div class="hl" style="left:444px;top:419px;width:242px;background:#fff"></div>
<div class="t" style="left:459px;top:426px">Hilfe</div>
</body></html>
